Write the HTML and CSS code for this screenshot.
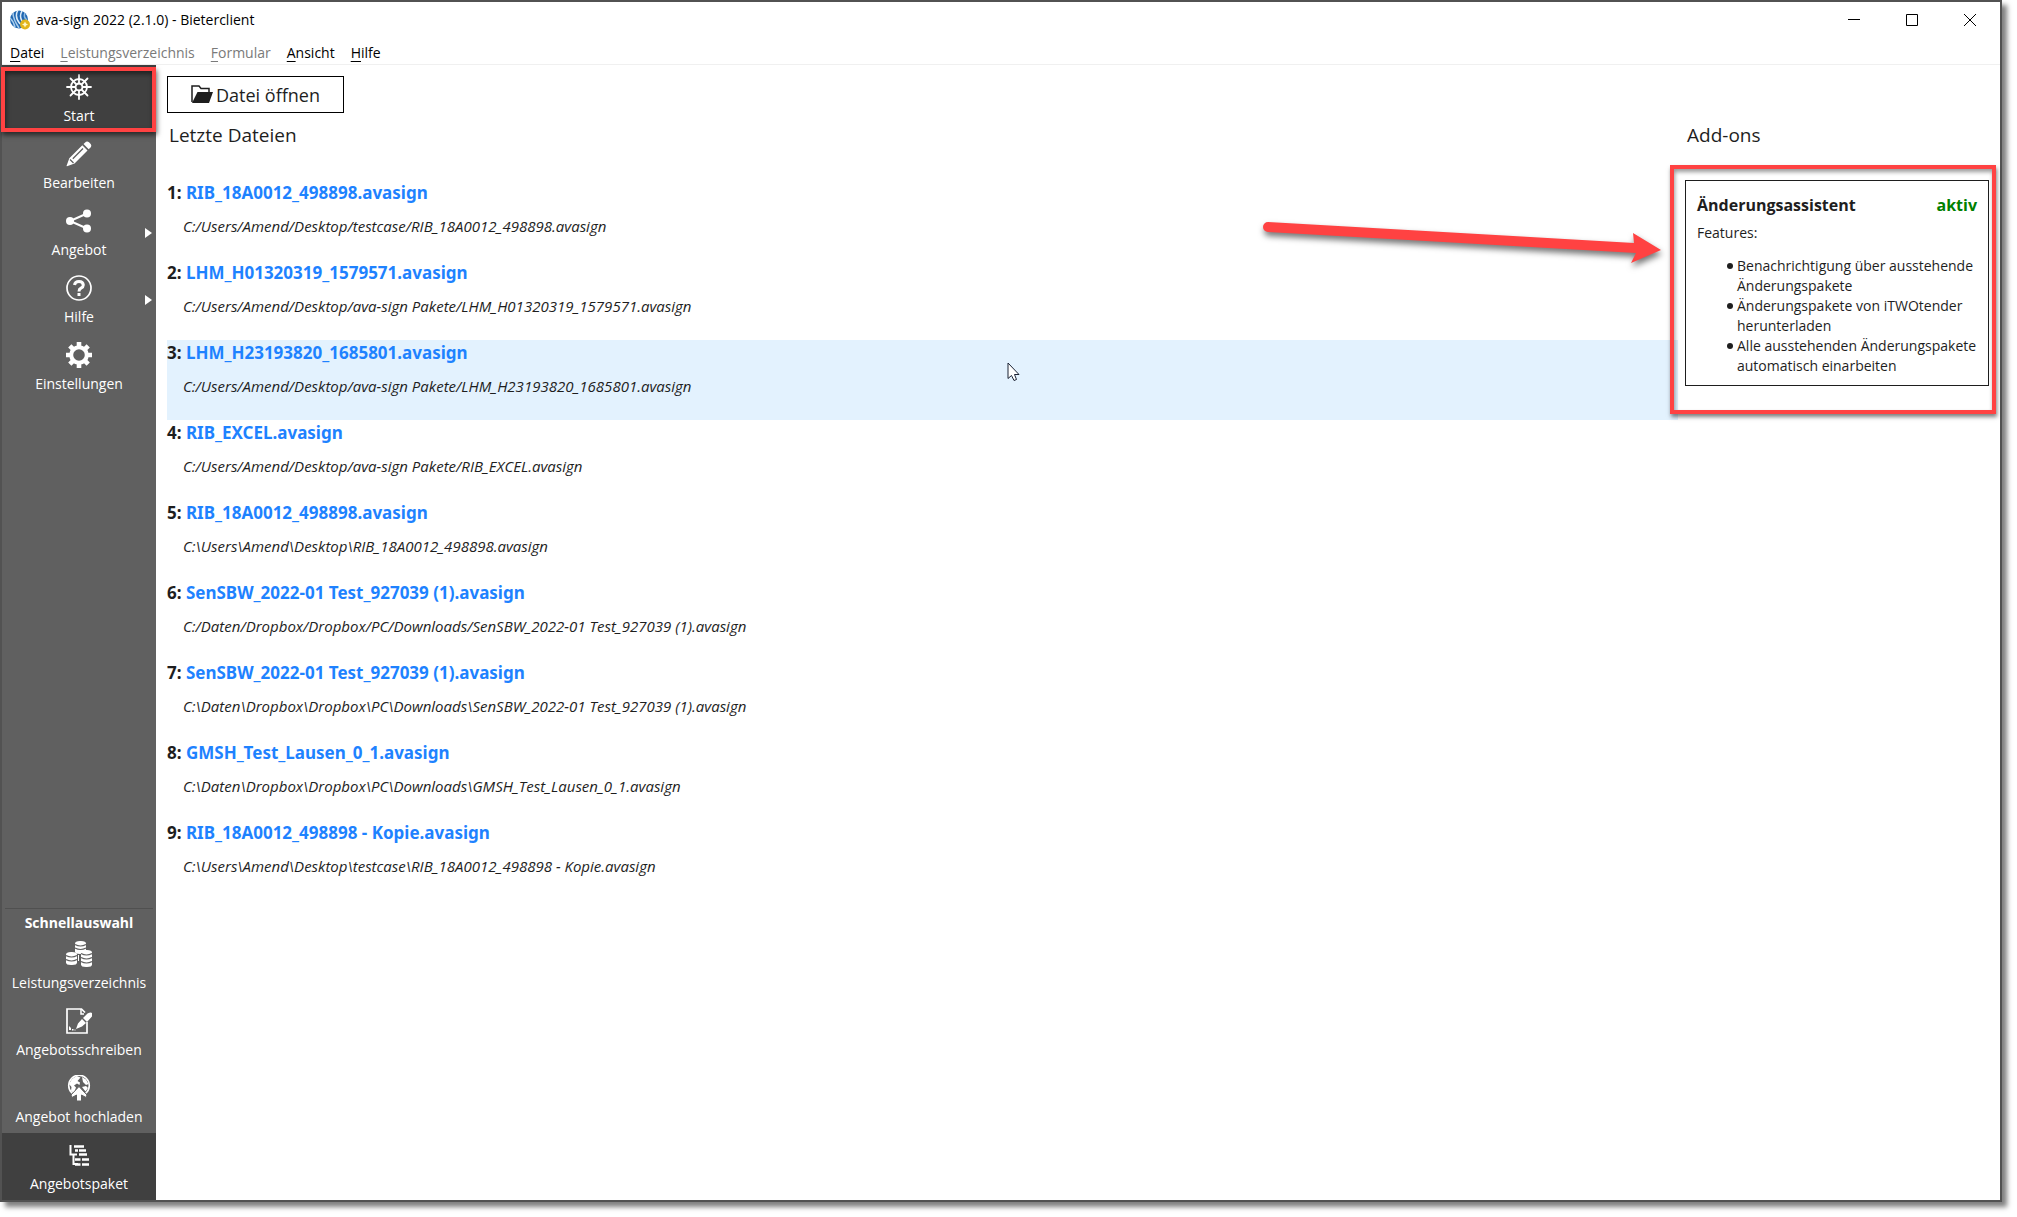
FILE: index.html
```html
<!DOCTYPE html>
<html lang="de">
<head>
<meta charset="utf-8">
<title>ava-sign 2022 (2.1.0) - Bieterclient</title>
<link rel="stylesheet" href="styles.css">
</head>
<body>
<div class="window">
  <header class="titlebar">
    <svg class="logo" viewBox="0 0 20 20" aria-hidden="true">
      <circle cx="9" cy="9.500" r="9" fill="#1f66b0"/>
      <path d="M0 8Q4 12 5 17.500M3 3Q3 9 9 18" fill="none" stroke="#a9cdec" stroke-width="1.500"/>
      <path d="M8 0Q4 7 10 14M12 1Q9 6 12 11" fill="none" stroke="#dcebf7" stroke-width="1.500"/>
      <path d="M15 3Q13 7 17 10" fill="none" stroke="#8fbce4" stroke-width="1.500"/>
      <circle cx="15" cy="14.500" r="5" fill="#e2b51c"/>
      <path d="M15 11.500l1 2 2 1-2 1-1 2-1-2-2-1 2-1z" fill="#fff7c8"/>
    </svg>
    <h1 class="title">ava-sign 2022 (2.1.0) - Bieterclient</h1>
    <div class="controls">
      <button class="control" aria-label="Minimieren"><svg viewBox="0 0 12 12"><path d="M0 5.500H12"/></svg></button>
      <button class="control" aria-label="Maximieren"><svg viewBox="0 0 12 12"><path d="M.5.5H11.500V11.500H.5Z"/></svg></button>
      <button class="control" aria-label="Schließen"><svg viewBox="0 0 12 12"><path d="M0 0L12 12M12 0L0 12"/></svg></button>
    </div>
  </header>
  <nav class="menubar">
    <button class="menu"><u>D</u>atei</button>
    <button class="menu" disabled><u>L</u>eistungsverzeichnis</button>
    <button class="menu" disabled><u>F</u>ormular</button>
    <button class="menu"><u>A</u>nsicht</button>
    <button class="menu"><u>H</u>ilfe</button>
  </nav>
  <div class="body">
    <aside class="sidebar">
      <button class="nav nav-active nav-marked">
        <svg class="icon" viewBox="0 0 26 26" fill="none" stroke="#fff" stroke-width="1.800" stroke-linecap="round">
          <circle cx="13" cy="13" r="8"/><circle cx="13" cy="13" r="3.500"/>
          <path d="M13 1V9.500M13 16.500V25M1 13H9.500M16.500 13H25M4.500 4.500L10.500 10.500M15.500 15.500L21.500 21.500M21.500 4.500L15.500 10.500M10.500 15.500L4.500 21.500"/>
        </svg>
        Start
      </button>
      <button class="nav">
        <svg class="icon" viewBox="0 0 26 26">
          <path fill="#fff" d="M17.500 3L20 .8Q21.500 0 23 1.300L24.700 3Q25.800 4.500 25 6L22.700 8.300ZM16.300 4.200L21.500 9.500 8.500 22.500 1 25.300.5 25 3.300 17.200Z"/>
          <path d="M17 7.500L6.800 17.700M4 18.500L7.500 22" stroke="#606060" stroke-width="1.300" fill="none"/>
        </svg>
        Bearbeiten
      </button>
      <button class="nav nav-sub">
        <svg class="icon" viewBox="0 0 26 26">
          <path d="M21 5.500L4 13L21 20.500" fill="none" stroke="#fff" stroke-width="2"/>
          <g fill="#fff"><circle cx="4" cy="13" r="4"/><circle cx="21" cy="5.500" r="4"/><circle cx="21" cy="20.500" r="4"/></g>
        </svg>
        Angebot
      </button>
      <button class="nav nav-sub">
        <svg class="icon" viewBox="0 0 26 26" fill="none" stroke="#fff">
          <circle cx="13" cy="13" r="12" stroke-width="1.700"/>
          <path d="M8.500 10Q9 6.500 13 6.500T17.300 10Q17.300 12 15 13.200Q13 14.200 13 16.500" stroke-width="3"/>
          <path d="M13 18V21" stroke-width="3"/>
        </svg>
        Hilfe
      </button>
      <button class="nav">
        <svg class="icon" viewBox="0 0 26 26">
          <circle cx="13" cy="13" r="7.800" fill="none" stroke="#fff" stroke-width="4"/>
          <path d="M15.500 1V5M10.500 1V5M15.500 21V25M10.500 21V25" stroke="none"/>
          <path d="M13 0V5M13 21V26M0 13H5M21 13H26M3.800 3.800L7.300 7.300M18.700 18.700L22.200 22.200M22.200 3.800L18.700 7.300M7.300 18.700L3.800 22.200" stroke="#fff" stroke-width="4.600"/>
        </svg>
        Einstellungen
      </button>
      <section class="quick">
        <h2 class="quick-title">Schnellauswahl</h2>
        <button class="nav">
          <svg class="icon" viewBox="0 0 26 26">
            <g fill="#fff">
              <rect x="9" y="0" width="11" height="13" rx="5" ry="2.500"/>
              <rect x="0" y="11" width="11" height="13" rx="5" ry="2.500"/>
              <rect x="15" y="9" width="11" height="17" rx="5" ry="2.500"/>
              <path d="M12 14h1v6h-1z"/>
            </g>
            <path d="M9 3.500q5.500 3 11 0M9 7q5.500 3 11 0M0 14.500q5.500 3 11 0M0 18.500q5.500 3 11 0M15 12.500q5.500 3 11 0M15 16.500q5.500 3 11 0M15 20.500q5.500 3 11 0" fill="none" stroke="#606060" stroke-width="1.200"/>
          </svg>
          Leistungsverzeichnis
        </button>
        <button class="nav">
          <svg class="icon" viewBox="0 0 26 26">
            <path d="M21 14V25H1V1H15.500L19 4.500" fill="none" stroke="#fff" stroke-width="1.700"/>
            <path d="M15 1V6H18" fill="none" stroke="#fff" stroke-width="1.500"/>
            <path d="M10 21L12 15.500 16 11 20 15 16 18.500ZM17 10L21.500 5.500Q25 4 26 5 27 7 25.500 9L21 14ZM3 18L5 20 5 22H3ZM6 21h1.500v1.500h-1.500zM8.500 21.500h1v1h-1z" fill="#fff"/>
          </svg>
          Angebotsschreiben
        </button>
        <button class="nav">
          <svg class="icon" viewBox="0 0 26 26">
            <circle cx="13" cy="10.500" r="10.300" fill="#606060" stroke="#fff" stroke-width="1.600"/>
            <path d="M10.500 1L14.500 2.500 11.500 6 14 7.500 13.500 10 11 8.500 8 10.500 10 12.500 8 18 5 16 5.500 12 3 9 6 4ZM16 2L20 4.500 22.500 9 20 10 17 7ZM16 12L20 11 22 13 19.500 16.500Z" fill="#fff"/>
            <path d="M13 11.500L21 20 20 22.500 15.500 20V26H10.500V20L6 22.500 5 20Z" fill="#fff" stroke="#606060" stroke-width="1"/>
          </svg>
          Angebot hochladen
        </button>
        <button class="nav nav-active">
          <svg class="icon" viewBox="0 0 26 26" fill="none" stroke="#fff">
            <path d="M4.500 3V12.500H11M7.500 12V22H12" stroke-width="2"/>
            <path d="M8 4.500H18M9 8.500H12M13 8.500H20M13 12.500H21M9 17.500H14.500M16 17.500H23M9 22.500H14.500M16 22.500H23" stroke-width="2.600"/>
          </svg>
          Angebotspaket
        </button>
      </section>
    </aside>
    <main class="content">
      <section class="files">
        <button class="open">
          <svg class="folder" viewBox="0 0 22 19"><path d="M1 17V1H8L10 3.500H18V7" fill="none" stroke="#1e1e1e" stroke-width="1.500"/><path d="M6.500 7H22L18 18H1Z" fill="#1e1e1e"/></svg>
          Datei öffnen
        </button>
        <h2 class="heading">Letzte Dateien</h2>
        <ol class="list">
          <li class="file"><span class="name">1: <a href="#">RIB_18A0012_498898.avasign</a></span><span class="path">C:/Users/Amend/Desktop/testcase/RIB_18A0012_498898.avasign</span></li>
          <li class="file"><span class="name">2: <a href="#">LHM_H01320319_1579571.avasign</a></span><span class="path">C:/Users/Amend/Desktop/ava-sign Pakete/LHM_H01320319_1579571.avasign</span></li>
          <li class="file file-hover"><span class="name">3: <a href="#">LHM_H23193820_1685801.avasign</a></span><span class="path">C:/Users/Amend/Desktop/ava-sign Pakete/LHM_H23193820_1685801.avasign</span>
            <svg class="pointer" viewBox="0 0 13 20" aria-hidden="true"><path d="M1 1V16.500L4.500 13.500 7 18.500 9.500 17.500 7.500 12.500H12Z" fill="#fff" stroke="#1b2233"/></svg></li>
          <li class="file"><span class="name">4: <a href="#">RIB_EXCEL.avasign</a></span><span class="path">C:/Users/Amend/Desktop/ava-sign Pakete/RIB_EXCEL.avasign</span></li>
          <li class="file"><span class="name">5: <a href="#">RIB_18A0012_498898.avasign</a></span><span class="path">C:\Users\Amend\Desktop\RIB_18A0012_498898.avasign</span></li>
          <li class="file"><span class="name">6: <a href="#">SenSBW_2022-01 Test_927039 (1).avasign</a></span><span class="path">C:/Daten/Dropbox/Dropbox/PC/Downloads/SenSBW_2022-01 Test_927039 (1).avasign</span></li>
          <li class="file"><span class="name">7: <a href="#">SenSBW_2022-01 Test_927039 (1).avasign</a></span><span class="path">C:\Daten\Dropbox\Dropbox\PC\Downloads\SenSBW_2022-01 Test_927039 (1).avasign</span></li>
          <li class="file"><span class="name">8: <a href="#">GMSH_Test_Lausen_0_1.avasign</a></span><span class="path">C:\Daten\Dropbox\Dropbox\PC\Downloads\GMSH_Test_Lausen_0_1.avasign</span></li>
          <li class="file"><span class="name">9: <a href="#">RIB_18A0012_498898 - Kopie.avasign</a></span><span class="path">C:\Users\Amend\Desktop\testcase\RIB_18A0012_498898 - Kopie.avasign</span></li>
        </ol>
      </section>
      <section class="addons">
        <h2 class="heading">Add-ons</h2>
        <div class="marked">
          <article class="card">
            <header class="card-head"><h3 class="card-title">Änderungsassistent</h3><span class="state">aktiv</span></header>
            <p class="features">Features:</p>
            <ul class="feature-list">
              <li>Benachrichtigung über ausstehende Änderungspakete</li>
              <li>Änderungspakete von iTWOtender herunterladen</li>
              <li>Alle ausstehenden Änderungspakete automatisch einarbeiten</li>
            </ul>
          </article>
          <svg class="arrow" viewBox="0 0 400 46" aria-hidden="true">
            <path d="M5 1L371 22 370 12 398 29 368 42 373 32 5 11A5 5 0 0 1 5 1Z" fill="#ff4242"/>
          </svg>
        </div>
      </section>
    </main>
  </div>
</div>
</body>
</html>
```

FILE: styles.css
```css
* { box-sizing: border-box; }

body {
  margin: 0;
  padding: 0 15px 15px 0;
  min-height: 100vh;
  display: flex;
  background: #fff;
  color: #1e1e1e;
  font: 14px/20px "Open Sans", "Noto Sans", sans-serif;
}

h1, h2, h3, p, ol, ul { margin: 0; padding: 0; font: inherit; }

button {
  margin: 0;
  padding: 0;
  border: 0;
  background: none;
  color: inherit;
  font: inherit;
}

.window {
  flex: 1;
  display: flex;
  flex-direction: column;
  border: 2px solid #525252;
  background: #fff;
  box-shadow: 5px 5px 5px rgba(0, 0, 0, .5);
}

.titlebar {
  display: flex;
  align-items: center;
  height: 36px;
  padding-left: 8px;
  color: #000;
}
.logo { width: 20px; height: 20px; margin-right: 6px; }
.controls { display: flex; margin-left: auto; padding-right: 1px; }
.control { display: flex; align-items: center; justify-content: center; width: 58px; height: 36px; }
.control svg { width: 12px; height: 12px; fill: none; stroke: #000; overflow: visible; }

.menubar {
  display: flex;
  gap: 16px;
  height: 27px;
  padding: 3px 8px 0;
  border-bottom: 1px solid #f0f0f0;
  color: #000;
}
.menu:disabled { color: #7a7a7a; }
.menu u { text-underline-offset: 3px; }

.body { flex: 1; display: flex; }

.sidebar {
  display: flex;
  flex-direction: column;
  width: 154px;
  background: #606060;
  color: #fff;
}
.nav {
  position: relative;
  display: flex;
  flex-direction: column;
  align-items: center;
  gap: 6px;
  width: 100%;
  height: 67px;
  padding-top: 9px;
  white-space: nowrap;
}
.nav-active { background: #404040; }
.icon { width: 26px; height: 26px; }
.nav-marked::after {
  content: "";
  position: absolute;
  inset: 2px 0 0 -1px;
  border: 4px solid #ff4242;
  box-shadow: 1px 3px 5px rgba(0, 0, 0, .6), inset 1px 3px 5px rgba(0, 0, 0, .5);
}
.nav-sub::after {
  content: "";
  position: absolute;
  right: 4px;
  top: 29px;
  border: 5px solid transparent;
  border-left: 7px solid #fff;
  border-right: 0;
}
.quick { margin-top: auto; }
.quick-title {
  height: 24px;
  margin: 0 3px;
  padding-top: 4px;
  border-top: 1px solid #505050;
  font-weight: 700;
  text-align: center;
}

.content { flex: 1; display: flex; padding: 11px; }
.files { flex: 1; }
.open {
  display: flex;
  align-items: center;
  justify-content: center;
  gap: 3px;
  width: 177px;
  height: 37px;
  border: 1px solid #000;
  background: #fff;
  font-size: 18px;
}
.folder { width: 22px; height: 19px; }
.heading { padding: 10px 2px 33px; font-size: 19px; line-height: 24px; }
.list { list-style: none; }
.file { position: relative; height: 80px; }
.file-hover { background: #e3f2fe; }
.name { display: block; padding-top: 2px; font-family: "Noto Sans", sans-serif; font-size: 17px; line-height: 22px; font-weight: 700; }
.name a { color: #1e82ff; text-decoration: none; }
.path { display: block; padding: 12px 16px 0; font-size: 15px; font-style: italic; }
.pointer { position: absolute; left: 840px; top: 22px; width: 13px; height: 20px; }

.addons { width: 311px; padding-top: 37px; }
.addons .heading { padding-left: 9px; }
.marked { position: relative; margin-left: 7px; }
.marked::before {
  content: "";
  position: absolute;
  inset: -15px -7px -28px -15px;
  border: 4px solid #ff4242;
  box-shadow: 1px 3px 4px rgba(0, 0, 0, .5), inset 1px 3px 4px rgba(0, 0, 0, .4);
}
.card { padding: 13px 11px 9px; border: 1px solid #1e1e1e; }
.card-head { display: flex; justify-content: space-between; font-size: 16px; line-height: 22px; }
.card-title, .state { font-weight: 700; }
.state { color: #008000; }
.features { padding: 7px 0 13px; }
.feature-list { margin-right: -8px; padding-left: 40px; list-style: none; }
.feature-list li { position: relative; }
.feature-list li::before {
  content: "";
  position: absolute;
  left: -10px;
  top: 7px;
  width: 6px;
  height: 6px;
  border-radius: 50%;
  background: #1e1e1e;
}
.arrow {
  position: absolute;
  right: 326px;
  top: 41px;
  width: 400px;
  height: 46px;
  filter: drop-shadow(1px 4px 3px rgba(0, 0, 0, .55));
}
```
